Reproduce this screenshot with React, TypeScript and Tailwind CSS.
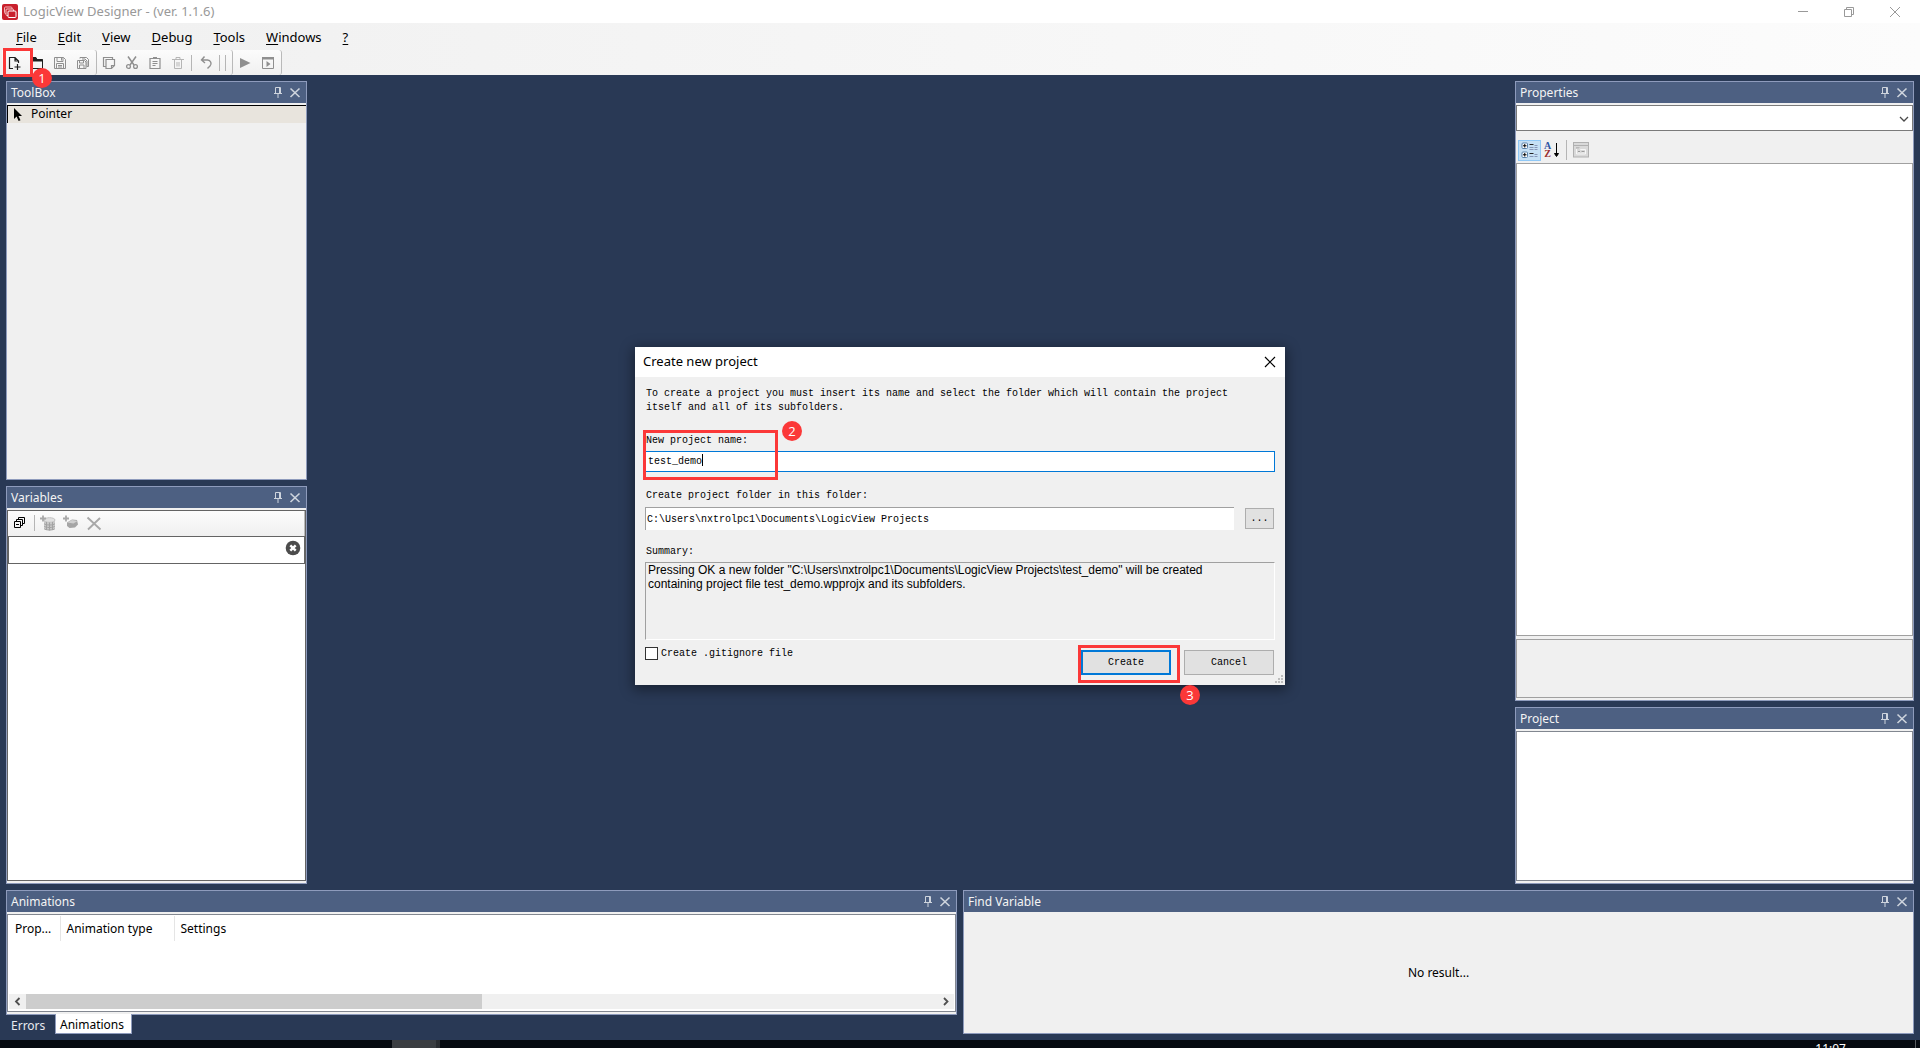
import { useState } from "react";
import type { ReactNode } from "react";

type IconProps = { children: ReactNode; className?: string; size?: number };

function Icon({ children, className = "", size = 16 }: IconProps) {
  return (
    <svg
      width={size}
      height={size}
      viewBox={`0 0 ${size} ${size}`}
      fill="none"
      stroke="currentColor"
      strokeWidth="1"
      className={`shrink-0 ${className}`}
      aria-hidden="true"
    >
      {children}
    </svg>
  );
}

function ToolButton({ label, tone = "text-[#8f8f8f]", children }: { label: string; tone?: string; children: ReactNode }) {
  return (
    <button type="button" aria-label={label} className={`flex h-6 w-[23px] items-center justify-center ${tone}`}>
      <Icon>{children}</Icon>
    </button>
  );
}

function Divider({ className = "" }: { className?: string }) {
  return <span className={`h-4 w-px bg-[#b5b5b5] ${className}`} />;
}

function Badge({ n, className }: { n: number; className: string }) {
  return (
    <span
      className={`absolute z-20 flex size-5 items-center justify-center rounded-full bg-[#fb3838] font-['Open_Sans',sans-serif] text-[13px] leading-none text-white ${className}`}
    >
      {n}
    </span>
  );
}

function Marker({ className }: { className: string }) {
  return <span className={`pointer-events-none absolute z-10 border-3 border-[#fb3838] ${className}`} />;
}

function PanelTitle({ title }: { title: string }) {
  return (
    <header className="flex h-[21px] shrink-0 items-center bg-[#4d6082] px-1 text-[#f4f4f4]">
      <h2 className="flex-1 text-[12px] leading-5">{title}</h2>
      <button type="button" aria-label={`Pin ${title}`} className="mr-[3px] text-[#ced4dd]">
        <Icon size={14}>
          <path d="M4.5 1.5h5v6h-5zM8.5 2v5M3 7.5h8M7 8v4" />
        </Icon>
      </button>
      <button type="button" aria-label={`Close ${title}`} className="text-[#ced4dd]">
        <Icon size={14}>
          <path d="M2.5 2.5l9 8.5M11.5 2.5l-9 8.5" strokeWidth="1.6" />
        </Icon>
      </button>
    </header>
  );
}

function Panel({ title, className = "", children }: { title: string; className?: string; children?: ReactNode }) {
  return (
    <section className={`flex min-h-0 flex-col border border-[#8e9bbc] bg-[#f0f0f0] ${className}`}>
      <PanelTitle title={title} />
      {children}
    </section>
  );
}

function TitleBar() {
  return (
    <div className="flex h-[23px] shrink-0 items-center bg-white px-[2px] text-[#999999]">
      <svg width="16" height="16" viewBox="0 0 16 16" aria-hidden="true">
        <rect width="16" height="16" rx="2" fill="#c9202c" />
        <g fill="none" stroke="#fff">
          <rect x="2.5" y="3" width="7.5" height="6.5" rx="1" stroke="#f0b5b8" />
          <rect x="4" y="5" width="7.5" height="6.5" rx="1" fill="#c9202c" stroke="#f3c9cb" />
          <rect x="6" y="7" width="8" height="6.5" rx="1" fill="#c9202c" />
        </g>
      </svg>
      <h1 className="ml-[5px] flex-1 text-[13px]">LogicView Designer - (ver. 1.1.6)</h1>
      <button type="button" aria-label="Minimize" className="flex w-[46px] justify-center">
        <Icon size={12}>
          <path d="M1 5.5h10" />
        </Icon>
      </button>
      <button type="button" aria-label="Restore" className="flex w-[46px] justify-center">
        <Icon size={12}>
          <path d="M1.5 3.5h7v7h-7zM3.5 3V1.5h7v7H9" />
        </Icon>
      </button>
      <button type="button" aria-label="Close" className="flex w-[46px] justify-center">
        <Icon size={12}>
          <path d="M1 1l10 10M11 1L1 11" />
        </Icon>
      </button>
    </div>
  );
}

const menus = ["File", "Edit", "View", "Debug", "Tools", "Windows", "?"];

function MenuBar() {
  return (
    <nav className="flex h-[27px] items-center gap-[21px] pt-0.5 pl-4 text-[13px] text-black">
      {menus.map((m) => (
        <button key={m} type="button">
          <span className="underline underline-offset-2">{m[0]}</span>
          {m.slice(1)}
        </button>
      ))}
    </nav>
  );
}

const strip =
  "flex h-[25px] items-center rounded-r-[3px] border-r border-[#b9b9b9] bg-linear-to-b from-[#fcfcfc] to-[#f0f0f0]";

function ToolBar() {
  return (
    <div className="relative flex h-[25px] pl-0.5">
      <Marker className="-top-0.5 left-[3px] h-[29px] w-[30px]" />
      <Badge n={1} className="top-[18px] left-8" />
      <div className={`${strip} w-[95px]`}>
        <ToolButton label="New project" tone="text-[#1e1e1e]">
          <path d="M7 13.500H3.500V2.500H9L12.500 6V8M9 2.500V6h3.500M11.500 9v6M8.500 12h6" strokeWidth="1.200" />
        </ToolButton>
        <ToolButton label="Open project" tone="text-[#1e1e1e]">
          <path d="M2.500 13.500V2.500h4l1.500 2h5.500v9z" />
          <path d="M2 2h5l1.500 2.500H14V6.500H2z" fill="currentColor" stroke="none" />
        </ToolButton>
        <ToolButton label="Save">
          <path d="M2.500 2.500h9l2 2v9h-11zM5 2.500v4h6v-4M9.500 3v2.500M4.500 13.500v-5h7v5M6 10.500h4M6 12h4" />
        </ToolButton>
        <ToolButton label="Save all">
          <path d="M2.500 5.500h7l1.500 1.500v6.500h-8.500zM4.500 5.500V8h4V5.500M4.500 13.500v-3.500h4.500v3.500M5 3.500v-1h6.500l2 2v7h-1.500M7 4h3l2 2v6" />
        </ToolButton>
      </div>
      <div className={`${strip} w-[136px]`}>
        <ToolButton label="Copy">
          <path d="M4.500 11.500h-2v-9h9v2M5 4.500h8.500v6l-3 3h-5.500zM10.500 13.500v-3h3" strokeWidth="1.200" />
        </ToolButton>
        <ToolButton label="Cut">
          <path d="M4 1.500l6 8.500M12 1.500L6 10" strokeWidth="1.500" />
          <circle cx="4.500" cy="11.500" r="1.900" strokeWidth="1.300" />
          <circle cx="11.500" cy="11.500" r="1.900" strokeWidth="1.300" />
        </ToolButton>
        <ToolButton label="Paste">
          <path d="M3 3.500h10v10H3zM6 2.500h4M5.500 6.500h5M5.500 8.500h5M5.500 10.500h3" strokeWidth="1.200" />
        </ToolButton>
        <ToolButton label="Delete" tone="text-[#b5b5b5]">
          <path d="M2 4.500h12M6 4v-1.500h4V4M4.500 5v8.500h7V5M7 7v4.500M9 7v4.500" />
        </ToolButton>
        <Divider className="mx-0.5" />
        <ToolButton label="Undo">
          <path d="M6.500 1.500L3.500 5l3.500 3M4 5h5.500a3.500 3.500 0 0 1 2.500 6L9.500 13.500" strokeWidth="1.400" />
        </ToolButton>
        <Divider className="ml-0.5" />
        <Divider className="ml-[5px]" />
      </div>
      <div className={`${strip} w-[49px]`}>
        <ToolButton label="Run">
          <path d="M3 3l10.500 5L3 13z" fill="currentColor" stroke="none" />
        </ToolButton>
        <ToolButton label="Run in window">
          <path d="M2.500 2.500h11v11h-11z" />
          <path d="M2 2h12v2.500H2zM6.500 6l4 3-4 3z" fill="currentColor" stroke="none" />
        </ToolButton>
      </div>
    </div>
  );
}

function ToolBoxPanel() {
  return (
    <Panel title="ToolBox" className="flex-1">
      <ul className="mt-0.5">
        <li>
          <button
            type="button"
            className="flex h-[18px] w-full items-center border-t border-l border-black bg-[#e8e4dd] pb-px pl-[5px] text-left text-[12px] leading-4"
          >
            <svg width="10" height="15" viewBox="0 0 10 15" aria-hidden="true">
              <path d="M1 1v11l2.600-2.500L5.600 14l1.900-.8-2-4.200H9z" fill="#000" />
            </svg>
            <span className="ml-2">Pointer</span>
          </button>
        </li>
      </ul>
    </Panel>
  );
}

function VariablesPanel() {
  return (
    <Panel title="Variables" className="h-[398px] shrink-0 pb-0.5">
      <div className="mt-0.5 flex min-h-0 flex-1 flex-col border border-[#646464] bg-white">
        <div className="flex h-[25px] shrink-0 items-center border-r border-[#b9b9b9] bg-linear-to-b from-[#fcfcfc] to-[#f0f0f0] pb-px pl-1">
          <button type="button" aria-label="Collapse all" className="text-black">
            <Icon>
              <path d="M2.500 6.500h6v6h-6zM4 9.500h3M4.500 6V4.500h6v6H9M6.500 4V2.500h6v6H11" />
            </Icon>
          </button>
          <Divider className="mr-[5px] ml-1.5" />
          <button type="button" aria-label="Add variable">
            <Icon className="text-[#a8a8a8]">
              <path d="M4 6v7c0 3 11 3 11 0V5z" fill="#c9c9c9" stroke="none" />
              <ellipse cx="9.500" cy="5" rx="5.500" ry="2.300" fill="#e0e0e0" stroke="#c2c2c2" />
              <path d="M4 8.500c1 2 10 2 11 0M4 11c1 2 10 2 11 0M4 13.500c1 2 10 2 11 0M6.500 7v8M9.500 7.500v8M12.500 7v8" stroke="#a3a3a3" />
              <path d="M0 3.500h6M3 .5v6" strokeWidth="1.800" />
            </Icon>
          </button>
          <button type="button" aria-label="Add item" className="ml-[7px]">
            <Icon className="text-[#a8a8a8]">
              <path d="M4 7.500L9 4.500l5 .5 1 4.500-3 3-5.500.5L4 11z" fill="#a5a5a5" stroke="none" />
              <path d="M4.500 7.500L9 5l5.500 1-4 2.500z" fill="#cfcfcf" stroke="none" />
              <path d="M0 3.500h6M3 .5v6" strokeWidth="1.800" />
            </Icon>
          </button>
          <button type="button" aria-label="Delete variable" className="ml-[7px] text-[#a8a8a8]">
            <Icon>
              <path d="M1.500 2.500l13 12M14 3L2 14.500" strokeWidth="1.900" />
            </Icon>
          </button>
        </div>
        <div className="relative shrink-0">
          <input
            type="text"
            aria-label="Filter variables"
            className="block h-7 w-full border border-[#646464] bg-white pr-6 pl-1 text-[12px] outline-none"
          />
          <button type="button" aria-label="Clear filter" className="absolute top-1 right-1">
            <Icon>
              <circle cx="8" cy="8" r="7.300" fill="#4c4c4c" stroke="none" />
              <path d="M5.300 5.300l5.400 5.400M10.700 5.300l-5.400 5.400" stroke="#fff" strokeWidth="2.400" />
            </Icon>
          </button>
        </div>
      </div>
    </Panel>
  );
}

function PropertiesPanel() {
  return (
    <Panel title="Properties" className="flex-1">
      <div className="relative mt-0.5 shrink-0">
        <select
          aria-label="Selected object"
          className="block h-[26px] w-full appearance-none border border-[#7a7a7a] bg-white pl-1 text-[12px] outline-none"
        />
        <Icon size={10} className="pointer-events-none absolute top-[9px] right-1 text-[#4a4a4a]">
          <path d="M1 3l4 4 4-4" strokeWidth="1.300" />
        </Icon>
      </div>
      <div className="flex h-8 shrink-0 items-center pt-1.5 pl-0.5">
        <button
          type="button"
          aria-label="Categorized"
          className="flex h-[21px] w-[23px] items-center justify-center border border-[#90c8f6] bg-[#c5e0f5]"
        >
          <Icon size={17}>
            <rect x="1" y="1" width="5.500" height="5.500" rx="1" fill="#fff" stroke="#5a83ab" />
            <rect x="1" y="10" width="5.500" height="5.500" rx="1" fill="#fff" stroke="#5a83ab" />
            <path d="M2 3.750h3.500M3.750 2v3.500M2 12.750h3.500M3.750 11v3.500" stroke="#000" />
            <path d="M8.500 2.500h4M8.500 11.500h4" stroke="#222" />
            <path d="M8.500 5.500h4M8.500 7.500h4M8.500 14.500h4M13.500 3.500h3M13.500 5.500h3M13.500 7.500h3M13.500 12.500h3M13.500 14.500h3" stroke="#8797b8" />
          </Icon>
        </button>
        <button type="button" aria-label="Alphabetical" className="ml-[3px] flex items-center">
          <span className="flex flex-col font-['Liberation_Serif',serif] text-[10px] leading-[8px] font-bold">
            <span className="text-[#2f55a4]">A</span>
            <span className="text-[#9a2d2d]">Z</span>
          </span>
          <svg width="7" height="16" viewBox="0 0 7 16" className="ml-0.5" aria-hidden="true">
            <path d="M3.500 1v12M1.500 11.500l2 3 2-3z" stroke="#000" fill="#000" />
          </svg>
        </button>
        <Divider className="ml-1.5 h-5 bg-[#8c8c8c]" />
        <button type="button" aria-label="Property pages" className="ml-1.5">
          <Icon className="text-[#b0b0b0]">
            <rect x=".5" y=".5" width="15" height="14.500" fill="#d9d9d9" />
            <path d="M1 3.500h14" />
            <path d="M3.500 6.500h3l1 1h5v4.500h-9zM5 10h2M8.500 10h3" stroke="#f6f6f6" />
            <path d="M3 6h3.500M5 9.500h2M8.500 9.500h3" stroke="#9b9b9b" />
          </Icon>
        </button>
      </div>
      <div className="min-h-0 flex-1 border border-[#a0a0a0] bg-white" />
      <div className="mt-[3px] mb-0.5 h-[59px] shrink-0 border border-[#a0a0a0]" />
    </Panel>
  );
}

function ProjectPanel() {
  return (
    <Panel title="Project" className="h-[177px] shrink-0">
      <div className="mt-0.5 mb-0.5 flex-1 border border-[#828790] bg-white" />
    </Panel>
  );
}

function AnimationsPanel() {
  return (
    <div className="flex min-w-0 flex-col">
      <Panel title="Animations" className="flex-1">
        <div className="mt-0.5 mb-0.5 flex min-h-0 flex-1 flex-col border border-[#828790] bg-white p-px">
          <table className="w-full table-fixed border-collapse text-left text-[12px]">
            <colgroup>
              <col className="w-[51px]" />
              <col className="w-[114px]" />
              <col />
            </colgroup>
            <thead>
              <tr className="h-[25px]">
                <th className="border-r border-[#e5e5e5] pt-px pl-[6px] font-normal">Prop...</th>
                <th className="border-r border-[#e5e5e5] pt-px pl-[6px] font-normal">Animation type</th>
                <th className="pt-px pl-[6px] font-normal">Settings</th>
              </tr>
            </thead>
          </table>
          <div className="mt-auto mb-px flex h-[15px] bg-[#f0f0f0] text-[#505050]">
            <button type="button" aria-label="Scroll left" className="flex w-[17px] items-center justify-center">
              <Icon size={9}>
                <path d="M6.500 1L3 4.500 6.500 8" strokeWidth="1.800" />
              </Icon>
            </button>
            <div className="flex-1">
              <div className="h-full w-1/2 bg-[#cdcdcd]" />
            </div>
            <button type="button" aria-label="Scroll right" className="flex w-[17px] items-center justify-center">
              <Icon size={9}>
                <path d="M3 1l3.500 3.500L3 8" strokeWidth="1.800" />
              </Icon>
            </button>
          </div>
        </div>
      </Panel>
      <div className="flex h-[19px] text-[12px] leading-[18px]" role="tablist">
        <button
          type="button"
          role="tab"
          aria-selected="false"
          className="w-[49px] pt-0.5 pl-[5px] text-left text-[#e8eaf0]"
        >
          Errors
        </button>
        <button
          type="button"
          role="tab"
          aria-selected="true"
          className="-mt-px w-[77px] border border-t-0 border-[#8e9bbc] bg-white pt-0.5 pl-1 text-left text-black"
        >
          Animations
        </button>
      </div>
    </div>
  );
}

function FindVariablePanel() {
  return (
    <Panel title="Find Variable" className="min-w-0">
      <p className="flex flex-1 items-center justify-center text-[12px]">No result...</p>
    </Panel>
  );
}

function CreateProjectDialog() {
  const [name, setName] = useState("test_demo");
  const [folder, setFolder] = useState("C:\\Users\\nxtrolpc1\\Documents\\LogicView Projects");
  const [ignore, setIgnore] = useState(false);
  return (
    <form
      role="dialog"
      aria-labelledby="dialog-title"
      onSubmit={(e) => e.preventDefault()}
      className="relative w-[650px] bg-[#f0f0f0] text-black shadow-[0_3px_12px_2px_rgba(0,0,0,0.4)]"
    >
      <header className="flex h-[30px] items-center bg-white pr-[9px] pl-2">
        <h2 id="dialog-title" className="flex-1 text-[13px]">
          Create new project
        </h2>
        <button type="button" aria-label="Close dialog">
          <Icon size={12}>
            <path d="M1 1l10 10M11 1L1 11" strokeWidth="1.200" />
          </Icon>
        </button>
      </header>
      <div className="px-2.5 pt-2.5 pb-2.5 font-['Liberation_Mono',monospace] text-[10px] leading-[14px]">
        <p className="pr-8 pl-px">
          To create a project you must insert its name and select the folder which will contain the project itself and
          all of its subfolders.
        </p>
        <div className="relative mt-[19px]">
          <Marker className="-top-1 -left-0.5 h-[50px] w-[135px]" />
          <Badge n={2} className="-top-[13px] left-[137px]" />
          <label htmlFor="project-name" className="block pl-px">
            New project name:
          </label>
          <div className="relative mt-[3px]">
            <input
              id="project-name"
              value={name}
              onChange={(e) => setName(e.target.value)}
              className="block h-[21px] w-full border border-[#0078d7] bg-white pl-0.5 caret-transparent outline-none"
            />
            <span className="absolute top-[3px] left-[57px] h-3 w-px bg-black" />
          </div>
        </div>
        <label htmlFor="project-folder" className="mt-[17px] block pl-px">
          Create project folder in this folder:
        </label>
        <div className="mt-1 flex items-center">
          <input
            id="project-folder"
            value={folder}
            onChange={(e) => setFolder(e.target.value)}
            className="h-[23px] flex-1 border-t border-l border-[#a0a0a0] bg-white pl-px outline-none"
          />
          <button
            type="button"
            aria-label="Browse"
            className="mr-px ml-[11px] h-[21px] w-[29px] border border-[#adadad] bg-[#e1e1e1]"
          >
            ...
          </button>
        </div>
        <label htmlFor="summary" className="mt-[15px] block pl-px">
          Summary:
        </label>
        <textarea
          id="summary"
          readOnly
          value={`Pressing OK a new folder "${folder}\\${name}" will be created\ncontaining project file ${name}.wpprojx and its subfolders.`}
          className="mt-[3px] block h-[78px] w-full resize-none border border-[#a0a0a0] border-r-white border-b-white bg-transparent pl-0.5 font-['Liberation_Sans',sans-serif] text-[12px] leading-[14px] outline-none"
        />
        <div className="mt-[7px] flex items-start">
          <label className="flex items-center">
            <input
              type="checkbox"
              checked={ignore}
              onChange={(e) => setIgnore(e.target.checked)}
              className="size-[13px] appearance-none border border-[#333333] bg-white checked:bg-[#0078d7]"
            />
            <span className="ml-[3px] leading-[13px]">Create .gitignore file</span>
          </label>
          <div className="relative mt-[3px] mr-px ml-auto flex gap-[13px]">
            <Marker className="-top-[5px] -left-[3px] h-[38px] w-[102px]" />
            <Badge n={3} className="top-[35px] left-[99px]" />
            <button type="submit" className="h-[25px] w-[90px] border-2 border-[#0078d7] bg-[#e1e1e1]">
              Create
            </button>
            <button type="button" className="h-[25px] w-[90px] border border-[#adadad] bg-[#e1e1e1]">
              Cancel
            </button>
          </div>
        </div>
      </div>
      <svg width="8" height="8" viewBox="0 0 8 8" className="absolute right-0.5 bottom-0.5" aria-hidden="true">
        <path d="M6 0h2v2H6zM3 3h2v2H3zM6 3h2v2H6zM0 6h2v2H0zM3 6h2v2H3zM6 6h2v2H6z" fill="#bdbdbd" />
      </svg>
    </form>
  );
}

function Taskbar() {
  return (
    <footer className="flex h-2 shrink-0 overflow-hidden bg-[#060a10]">
      <div className="ml-[392px] w-11 bg-[#3b3e42]" />
      <div className="w-1 bg-[#2a2d31]" />
      <time className="mt-1 mr-[69px] ml-auto text-[12px] leading-[10px] text-white">11:07</time>
      <div className="mr-1 w-px bg-[#5a5d61]" />
    </footer>
  );
}

export default function App() {
  return (
    <div className="relative flex h-screen min-h-[600px] flex-col overflow-hidden bg-[#293955] font-['Noto_Sans','Open_Sans',sans-serif] text-black">
      <TitleBar />
      <div className="shrink-0 bg-linear-to-r from-[#f0f0f0] to-[#fcfcfc]">
        <MenuBar />
        <ToolBar />
      </div>
      <main className="flex min-h-0 flex-1 flex-col gap-1.5 p-1.5">
        <div className="flex min-h-0 flex-1 justify-between">
          <div className="flex w-[301px] flex-col gap-1.5">
            <ToolBoxPanel />
            <VariablesPanel />
          </div>
          <div className="flex w-[399px] flex-col gap-1.5">
            <PropertiesPanel />
            <ProjectPanel />
          </div>
        </div>
        <div className="grid h-36 shrink-0 grid-cols-2 gap-1.5">
          <AnimationsPanel />
          <FindVariablePanel />
        </div>
      </main>
      <Taskbar />
      <div className="absolute inset-0 flex items-center justify-center pb-4">
        <CreateProjectDialog />
      </div>
    </div>
  );
}
